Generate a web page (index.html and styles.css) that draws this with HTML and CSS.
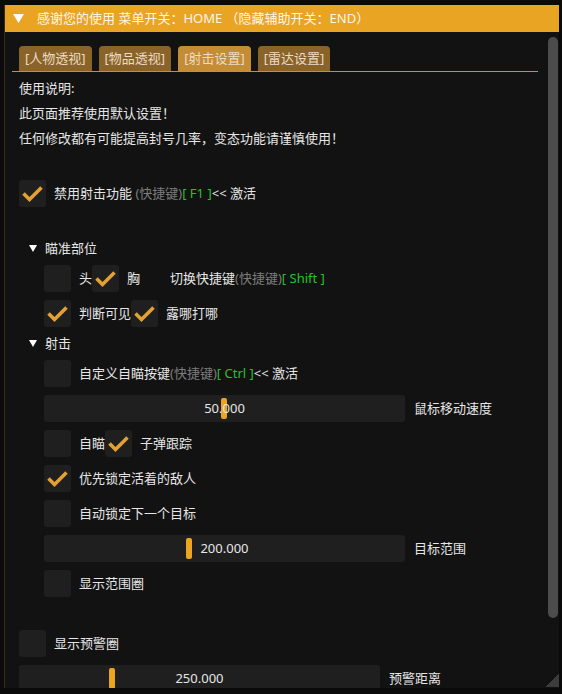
FILE: index.html
```html
<!DOCTYPE html>
<html lang="zh-CN">
<head>
    <meta charset="UTF-8">
    <title>射击设置</title>
    <link rel="stylesheet" href="styles.css">
</head>
<body>
    <div class="window">
        <div class="titlebar">
            <svg class="title-arrow" width="11" height="9" viewBox="0 0 11 9"><polygon points="0,0 11,0 5.5,9" fill="#fff"/></svg>
            <span>感谢您的使用 菜单开关：HOME （隐藏辅助开关：END）</span>
        </div>

        <div class="window-body">
            <div class="content">
                <div class="tab-bar">
                    <div class="tab">[人物透视]</div>
                    <div class="tab">[物品透视]</div>
                    <div class="tab active">[射击设置]</div>
                    <div class="tab">[雷达设置]</div>
                </div>

                <div class="text">使用说明:</div>
                <div class="text">此页面推荐使用默认设置！</div>
                <div class="text">任何修改都有可能提高封号几率，变态功能请谨慎使用！</div>
                <div class="spacer"></div>

                <div class="row">
                    <span class="checkbox checked"><svg viewBox="0 0 27 27"><polyline points="4.5,13.5 10.5,19.5 22.5,7.5"/></svg></span>
                    <span class="label">禁用射击功能</span>
                    <span class="dim">&nbsp;(快捷键)</span><span class="key">[ F1 ]</span><span>&lt;&lt; 激活</span>
                </div>
                <div class="spacer"></div>

                <!-- 瞄准部位 -->
                <div class="tree">
                    <svg class="tree-arrow" width="8" height="7" viewBox="0 0 8 7"><polygon points="0,0 8,0 4,7" fill="#fff"/></svg>
                    <span>瞄准部位</span>
                </div>
                <div class="indent">
                    <div class="row">
                        <span class="checkbox"></span>
                        <span class="label">头</span>
                        <span class="checkbox checked"><svg viewBox="0 0 27 27"><polyline points="4.5,13.5 10.5,19.5 22.5,7.5"/></svg></span>
                        <span class="label">胸</span>
                        <span class="hotkey">切换快捷键</span><span class="dim">(快捷键)</span><span class="key">[ Shift ]</span>
                    </div>
                    <div class="row">
                        <span class="checkbox checked"><svg viewBox="0 0 27 27"><polyline points="4.5,13.5 10.5,19.5 22.5,7.5"/></svg></span>
                        <span class="label">判断可见</span>
                        <span class="checkbox checked"><svg viewBox="0 0 27 27"><polyline points="4.5,13.5 10.5,19.5 22.5,7.5"/></svg></span>
                        <span class="label">露哪打哪</span>
                    </div>
                </div>

                <!-- 射击 -->
                <div class="tree">
                    <svg class="tree-arrow" width="8" height="7" viewBox="0 0 8 7"><polygon points="0,0 8,0 4,7" fill="#fff"/></svg>
                    <span>射击</span>
                </div>
                <div class="indent">
                    <div class="row">
                        <span class="checkbox"></span>
                        <span class="label">自定义自瞄按键</span><span class="dim">(快捷键)</span><span class="key">[ Ctrl ]</span><span>&lt;&lt; 激活</span>
                    </div>
                    <div class="row">
                        <div class="slider">
                            <span class="grab" style="left: 177px"></span>
                            <span class="slider-value">50.000</span>
                        </div>
                        <span class="slider-label">鼠标移动速度</span>
                    </div>
                    <div class="row">
                        <span class="checkbox"></span>
                        <span class="label">自瞄</span>
                        <span class="checkbox checked"><svg viewBox="0 0 27 27"><polyline points="4.5,13.5 10.5,19.5 22.5,7.5"/></svg></span>
                        <span class="label">子弹跟踪</span>
                    </div>
                    <div class="row">
                        <span class="checkbox checked"><svg viewBox="0 0 27 27"><polyline points="4.5,13.5 10.5,19.5 22.5,7.5"/></svg></span>
                        <span class="label">优先锁定活着的敌人</span>
                    </div>
                    <div class="row">
                        <span class="checkbox"></span>
                        <span class="label">自动锁定下一个目标</span>
                    </div>
                    <div class="row">
                        <div class="slider">
                            <span class="grab" style="left: 142px"></span>
                            <span class="slider-value">200.000</span>
                        </div>
                        <span class="slider-label">目标范围</span>
                    </div>
                    <div class="row">
                        <span class="checkbox"></span>
                        <span class="label">显示范围圈</span>
                    </div>
                </div>
                <div class="spacer"></div>

                <div class="row">
                    <span class="checkbox"></span>
                    <span class="label">显示预警圈</span>
                </div>
                <div class="row">
                    <div class="slider">
                        <span class="grab" style="left: 90px"></span>
                        <span class="slider-value">250.000</span>
                    </div>
                    <span class="slider-label">预警距离</span>
                </div>
            </div>

            <div class="scrollbar"><div class="scroll-thumb"></div></div>
        </div>

        <div class="resize-grip"></div>
    </div>
</body>
</html>
```

FILE: styles.css
```css
:root {
    --accent: #e9a424;
    --tab: #8a6328;
    --tab-active: #c58c36;
    --text: #e6e6e6;
    --text-dim: #7c7c7c;
    --key: #26c22a;
    --frame: #1f1f1f;
    --window: #121212;
}

* {
    margin: 0;
    padding: 0;
    box-sizing: border-box;
}

body {
    background-color: #0a0a0a;
    font-family: 'Noto Sans', 'Noto Sans CJK SC', sans-serif;
    font-size: 13px;
    line-height: 17px;
    color: var(--text);
}

.window {
    position: relative;
    margin: 5px 0 0 4px;
    width: 555px;
    height: 683px;
    background-color: var(--window);
    border-left: 1px solid #3d2c14;
    overflow: hidden;
}

.titlebar {
    height: 27px;
    background-color: var(--accent);
    color: #fff6e6;
    display: flex;
    align-items: center;
    padding-left: 8px;
}

.title-arrow {
    margin-right: 13px;
}

.window-body {
    display: flex;
    height: 656px;
}

.content {
    flex: 1;
    padding: 14px 0 0 14px;
}

/* Tabs */
.tab-bar {
    display: flex;
    gap: 7px;
    margin: 0 0 8px -7px;
    padding-left: 7px;
    border-bottom: 1px solid #c8912e;
}

.tab {
    height: 25px;
    line-height: 25px;
    padding: 0 6px;
    background-color: var(--tab);
    color: #eadcc6;
    border-radius: 4px 4px 0 0;
}

.tab.active {
    background-color: var(--tab-active);
}

.text {
    height: 17px;
    margin-bottom: 8px;
    white-space: nowrap;
}

.spacer {
    height: 17px;
    margin-bottom: 8px;
}

/* Rows and widgets */
.row {
    display: flex;
    align-items: center;
    height: 27px;
    margin-bottom: 8px;
    white-space: nowrap;
}

.indent {
    padding-left: 25px;
}

.checkbox {
    width: 27px;
    height: 27px;
    flex: none;
    background-color: var(--frame);
    border-radius: 3px;
}

.checkbox svg {
    display: block;
    width: 27px;
    height: 27px;
}

.checkbox polyline {
    fill: none;
    stroke: #e2a132;
    stroke-width: 3.6;
}

.checkbox + .label {
    margin-left: 8px;
}

.dim {
    color: var(--text-dim);
}

.key {
    color: var(--key);
}

.hotkey {
    margin-left: 30px;
}

.tree {
    display: flex;
    align-items: center;
    height: 17px;
    margin-bottom: 8px;
    padding-left: 10px;
}

.tree-arrow {
    margin-right: 8px;
}

.slider {
    position: relative;
    width: 361px;
    height: 27px;
    flex: none;
    background-color: var(--frame);
    border-radius: 3px;
    text-align: center;
    line-height: 27px;
}

.grab {
    position: absolute;
    top: 3px;
    width: 6px;
    height: 21px;
    background-color: #eba520;
    border-radius: 2px;
}

.slider-value {
    position: relative;
}

.slider-label {
    margin-left: 9px;
}

/* Scrollbar */
.scrollbar {
    width: 10px;
    margin: 5px 1px 0 10px;
}

.scroll-thumb {
    height: 581px;
    background-color: #4c4c4c;
    border-radius: 5px;
}

.resize-grip {
    position: absolute;
    right: 0;
    bottom: 1px;
    width: 14px;
    height: 14px;
    background: linear-gradient(to top left, #3c3c3c 50%, transparent 50%);
}
```
